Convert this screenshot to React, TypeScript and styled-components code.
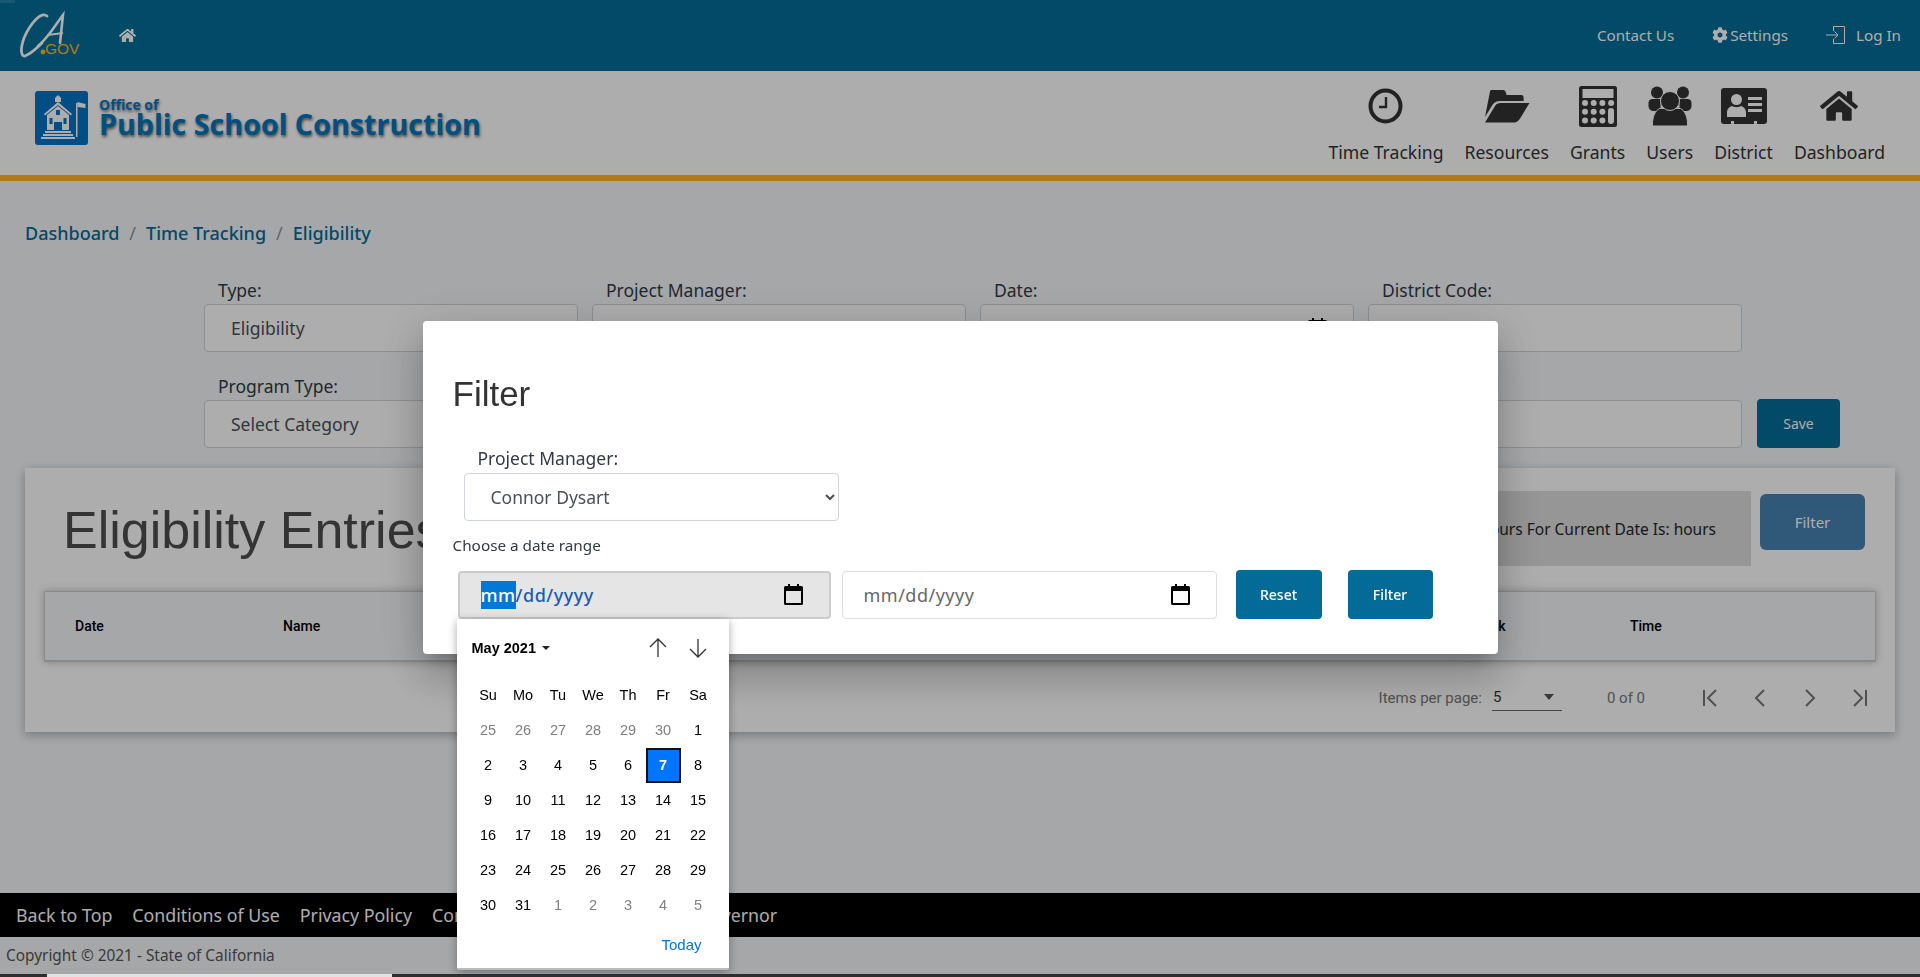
import styled, { createGlobalStyle } from "styled-components";
import { FaCog, FaHome } from "react-icons/fa";

const sans = `"Noto Sans", "Lato", sans-serif`;
const arial = `"Liberation Sans", Arial, sans-serif`;

const GlobalStyle = createGlobalStyle`
  html, body {
    margin: 0;
    padding: 0;
    height: 977px;
    overflow: hidden;
    background: #f5f7fa;
    font-family: ${sans};
    color: #323a45;
  }
  * { box-sizing: border-box; }
`;

const Page = styled.div`
  position: relative;
  display: flex;
  flex-direction: column;
  height: 977px;
`;

const CornerTab = styled.div`
  position: absolute;
  left: 0;
  top: 0;
  width: 15px;
  height: 3px;
  background: #1f84ad;
`;

const TopBar = styled.div`
  height: 71px;
  background: #036d99;
  display: flex;
  align-items: center;
  justify-content: space-between;
  padding: 0 19px 0 18px;
  color: #fff;
`;

const TopLeft = styled.div`
  display: flex;
  align-items: center;
  gap: 35px;
`;

const TopLinks = styled.div`
  display: flex;
  align-items: center;
  gap: 38px;
  font-size: 15.2px;
  padding-bottom: 1px;
`;

const TopLink = styled.span`
  display: inline-flex;
  align-items: center;
  gap: ${({ $gap }: { $gap?: number }) => $gap ?? 2}px;
`;

const Header = styled.div`
  height: 110px;
  background: #fff;
  border-bottom: 6px solid #fdb81e;
  display: flex;
  justify-content: space-between;
  padding: 20px 35px 0 35px;
`;

const Brand = styled.div`
  display: flex;
  gap: 11px;
`;

const BrandText = styled.div`
  display: flex;
  flex-direction: column;
  color: #0075bf;
  font-family: "Open Sans", sans-serif;
  font-weight: 700;
  text-shadow: 1px 2px 3px rgba(0, 0, 0, 0.55);
`;

const BrandSmall = styled.span`
  font-size: 14px;
  line-height: 14px;
  margin-top: 7px;
`;

const BrandLarge = styled.span`
  font-size: 28.7px;
  line-height: 27px;
  margin-top: -2px;
  white-space: nowrap;
`;

const Nav = styled.div`
  display: flex;
  gap: 21px;
`;

const NavItem = styled.div`
  display: flex;
  flex-direction: column;
  align-items: center;
  color: #333;
  font-size: 17.6px;
`;

const NavIcon = styled.div`
  height: 54px;
  display: flex;
  align-items: center;
  justify-content: center;
  margin-top: -12px;
  color: #333;
`;

const NavLabel = styled.span`
  margin-top: 7px;
  line-height: 24px;
  white-space: nowrap;
`;

const Content = styled.div`
  flex: 1;
  display: flex;
  flex-direction: column;
`;

const Crumbs = styled.div`
  display: flex;
  align-items: center;
  gap: 10px;
  padding: 6px 25px 0;
  height: 97px;
  font-size: 18px;
  color: #046b99;
  font-weight: 500;
`;

const CrumbSep = styled.span`
  color: #8c939a;
  font-weight: 400;
`;

const FieldGrid = styled.div`
  display: grid;
  grid-template-columns: repeat(4, 374px) 83px;
  column-gap: 14px;
  padding-left: 204px;
  align-items: end;
`;

const Field = styled.div`
  display: flex;
  flex-direction: column;
`;

const FieldLabel = styled.label`
  height: 26px;
  line-height: 24px;
  padding-left: 14px;
  font-size: 17.500px;
  color: #323a45;
`;

const FieldBox = styled.div`
  height: 48px;
  border: 1px solid #ced4da;
  border-radius: 4px;
  background: #fff;
  padding: 0 26px;
  display: flex;
  align-items: center;
  justify-content: space-between;
  font-size: 17.500px;
  color: #495057;
  margin-bottom: 22px;
`;

const SaveButton = styled.button`
  height: 49px;
  width: 83px;
  border: 0;
  border-radius: 4px;
  background: #036d99;
  color: #fff;
  font-family: ${sans};
  font-size: 14px;
  margin-bottom: 22px;
  margin-left: 1px;
`;

const Card = styled.div`
  margin: -2px 25px 0;
  height: 264px;
  background: #fff;
  box-shadow: 0 3px 10px rgba(0, 0, 0, 0.3);
  display: flex;
  flex-direction: column;
`;

const CardTop = styled.div`
  height: 123px;
  display: flex;
  padding: 23px 30px 0 38px;
  justify-content: space-between;
  align-items: flex-start;
`;

const CardTitle = styled.h1`
  margin: 10px 0 0;
  font-family: ${arial};
  font-weight: 400;
  font-size: 52px;
  line-height: 58px;
  color: #4d4d4d;
`;

const CardActions = styled.div`
  display: flex;
  gap: 9px;
`;

const HoursBox = styled.div`
  width: 420px;
  height: 75px;
  background: #ddd;
  display: flex;
  align-items: center;
  justify-content: flex-end;
  padding: 0 35px 0 0;
  font-size: 15.500px;
  color: #212529;
`;

const LightButton = styled.button`
  width: 105px;
  height: 56px;
  margin-top: 3px;
  border: 0;
  border-radius: 6px;
  background: #4882b3;
  color: #fff;
  font-family: ${sans};
  font-size: 15px;
`;

const TableHead = styled.div`
  height: 71px;
  margin: 0 19px;
  background: #f5f7fa;
  border: 1px solid #ccc;
  border-bottom-width: 2px;
  box-shadow: 0 0 8px rgba(0, 0, 0, 0.25);
  display: grid;
  grid-template-columns: 208px 1193px 154px auto;
  align-items: center;
  padding-left: 30px;
  font-family: Roboto, sans-serif;
  font-weight: 500;
  font-size: 14px;
  color: #000;
`;

const Paginator = styled.div`
  flex: 1;
  display: flex;
  align-items: center;
  justify-content: flex-end;
  padding: 1px 23px 0 0;
  color: #777;
  font-family: Roboto, sans-serif;
  font-size: 15px;
`;

const PageSize = styled.div`
  width: 70px;
  height: 27px;
  margin: 0 45px 0 10px;
  border-bottom: 1px solid #666;
  display: flex;
  justify-content: space-between;
  align-items: center;
  color: #333;
  padding: 0 8px 0 1px;
`;

const Caret = styled.span`
  width: 0;
  height: 0;
  border-left: 5px solid transparent;
  border-right: 5px solid transparent;
  border-top: 6px solid #555;
`;

const PageArrows = styled.div`
  display: flex;
  gap: 26px;
  margin-left: 53px;
  color: #777;
`;

const Footer = styled.div`
  height: 44px;
  background: #000;
  color: #fff;
  display: flex;
  align-items: center;
  gap: 20px;
  padding-left: 16px;
  font-size: 17.800px;
`;

const Copyright = styled.div`
  height: 37px;
  display: flex;
  align-items: center;
  padding-left: 6px;
  font-size: 15.400px;
  color: #555;
`;

const EdgeStrip = styled.div`
  position: relative;
  z-index: 20;
  height: 3px;
  background: #2e2e2e;
  padding-left: 47px;
`;

const EdgeTab = styled.div`
  width: 345px;
  height: 3px;
  background: #e2e2e2;
`;

const Backdrop = styled.div`
  position: fixed;
  inset: 0;
  z-index: 10;
  background: rgba(0, 0, 0, 0.32);
  display: flex;
  justify-content: center;
  padding-top: 321px;
`;

const Modal = styled.div`
  width: 1075px;
  height: 333px;
  background: #fff;
  border-radius: 4px;
  box-shadow: 0 11px 15px -7px rgba(0, 0, 0, 0.2), 0 24px 38px 3px rgba(0, 0, 0, 0.14), 0 9px 46px 8px rgba(0, 0, 0, 0.12);
  padding: 50px 30px 0;
`;

const ModalTitle = styled.h2`
  margin: 0;
  font-family: ${arial};
  font-weight: 400;
  font-size: 35px;
  line-height: 46px;
  color: #333;
`;

const ModalField = styled.div`
  margin: 29px 0 0 11px;
  width: 375px;
  display: flex;
  flex-direction: column;
`;

const ModalLabel = styled.label`
  padding-left: 14px;
  font-size: 17.500px;
  line-height: 24px;
  height: 27px;
  color: #323a45;
`;

const ManagerSelect = styled.select`
  height: 48px;
  width: 375px;
  border: 1px solid #ced4da;
  border-radius: 4px;
  background: #fff;
  padding: 0 22px;
  font-family: ${sans};
  font-size: 17.500px;
  color: #495057;
`;

const RangeLabel = styled.div`
  margin-top: 13px;
  height: 23px;
  line-height: 22px;
  font-size: 15.300px;
  color: #323a45;
`;

const RangeRow = styled.div`
  display: flex;
  align-items: center;
  gap: 11px;
  margin: 13px 0 0 5px;
`;

const DateField = styled.div<{ $active?: boolean }>`
  position: relative;
  width: ${({ $active }) => ($active ? 373 : 375)}px;
  height: 48px;
  border-radius: 4px;
  border: ${({ $active }) => ($active ? "2px solid #ccc" : "1px solid #ddd")};
  background: ${({ $active }) => ($active ? "#e5e5e5" : "#fff")};
  color: ${({ $active }) => ($active ? "#1a5cb0" : "#666")};
  font-weight: ${({ $active }) => ($active ? 500 : 400)};
  font-size: 18px;
  letter-spacing: 0.5px;
  display: flex;
  align-items: center;
  justify-content: space-between;
  padding: 0 26px 0 21px;
`;

const Highlight = styled.span`
  background: #0078d7;
  color: #fff;
  padding: 2px 0;
`;

const ModalButton = styled.button<{ $w: number; $ml: number }>`
  height: 49px;
  width: ${({ $w }) => $w}px;
  margin-left: ${({ $ml }) => $ml}px;
  border: 0;
  border-radius: 4px;
  background: #046b99;
  color: #fff;
  font-family: ${sans};
  font-size: 14px;
  font-weight: 500;
`;

const Picker = styled.div`
  position: absolute;
  left: -3px;
  top: 46px;
  width: 272px;
  height: 351px;
  background: #fff;
  border-bottom: 2px solid #bbb;
  border-radius: 2px;
  box-shadow: 0 2px 10px rgba(0, 0, 0, 0.35);
  font-family: ${arial};
  font-size: 14.500px;
  letter-spacing: 0;
  color: #000;
  font-weight: 400;
  z-index: 5;
`;

const PickerHead = styled.div`
  height: 59px;
  display: flex;
  align-items: center;
  justify-content: space-between;
  padding: 0 21px 0 15px;
`;

const PickerMonth = styled.div`
  display: flex;
  align-items: center;
  gap: 6px;
  font-weight: 700;
`;

const PickerCaret = styled.span`
  width: 0;
  height: 0;
  border-left: 4.500px solid transparent;
  border-right: 4.500px solid transparent;
  border-top: 4.500px solid #222;
`;

const PickerArrows = styled.div`
  display: flex;
  gap: 20px;
  color: #333;
`;

const DayGrid = styled.div`
  display: grid;
  grid-template-columns: repeat(7, 35px);
  grid-auto-rows: 35px;
  padding-left: 14px;
`;

const DayCell = styled.div<{ $muted?: boolean; $selected?: boolean }>`
  display: flex;
  align-items: center;
  justify-content: center;
  color: ${({ $muted, $selected }) => ($selected ? "#fff" : $muted ? "#808080" : "#000")};
  background: ${({ $selected }) => ($selected ? "#0075ff" : "transparent")};
  border: ${({ $selected }) => ($selected ? "2px solid #111" : "0")};
  font-weight: ${({ $selected }) => ($selected ? 700 : 400)};
`;

const PickerFoot = styled.div`
  display: flex;
  justify-content: flex-end;
  padding: 13px 27px 0 0;
  color: #0075e0;
  font-size: 15px;
`;

const WEEKDAYS = ["Su", "Mo", "Tu", "We", "Th", "Fr", "Sa"];
const DAYS: { d: number; muted?: boolean }[] = [
  ...[25, 26, 27, 28, 29, 30].map((d) => ({ d, muted: true })),
  ...Array.from({ length: 31 }, (_, i) => ({ d: i + 1 })),
  ...[1, 2, 3, 4, 5].map((d) => ({ d, muted: true })),
];

const CaLogo = () => (
  <svg width="66" height="52" viewBox="0 0 66 52" fill="none">
    <path d="M29 6C23 1 12 14 6 28C2 39 3 47 7 46C12 44 19 38 24 33" stroke="#fff" strokeWidth="2.800" strokeLinecap="round" />
    <path d="M20 36C30 28 38 14 45 5C44 14 43 24 42 33" stroke="#fff" strokeWidth="2.600" strokeLinecap="round" />
    <path d="M30 25L45 23" stroke="#fff" strokeWidth="2" />
    <circle cx="25" cy="42" r="2.400" fill="#fdb81e" />
    <text x="27" y="43.500" fontFamily="Liberation Sans" fontSize="15.500" fill="#fdb81e">GOV</text>
  </svg>
);

const SchoolLogo = () => (
  <svg width="53" height="54" viewBox="0 0 53 54">
    <rect width="53" height="54" rx="3" fill="#0073c4" />
    <g fill="#fff">
      <path d="M23 4l3 3v4h-6V7z" />
      <path d="M23 11L37 23l-1 1.500L23 14 10 24.500 9 23z" />
      <path d="M12 24l11-9 11 9v15H27v-8h-8v8h-7z" />
      <rect x="10" y="40" width="26" height="2" />
      <rect x="8" y="43" width="30" height="2" />
      <rect x="6" y="46" width="34" height="2" />
      <rect x="41" y="12" width="1.500" height="34" />
      <path d="M42.500 11l8 2v4l-8-1z" />
    </g>
    <g fill="#0073c4">
      <rect x="21" y="19" width="4" height="5" />
      <rect x="14.500" y="27" width="3" height="6" />
      <rect x="28.500" y="27" width="3" height="6" />
    </g>
  </svg>
);

const ClockIcon = () => (
  <svg width="35" height="36" viewBox="0 0 35 36" fill="none" stroke="#333">
    <ellipse cx="17.500" cy="18" rx="15" ry="15.500" strokeWidth="4" />
    <path d="M18 9v10h-7" strokeWidth="2.400" />
  </svg>
);

const FolderIcon = () => (
  <svg width="46" height="34" viewBox="0 0 46 34" fill="#333">
    <path d="M1 28L6 2.500C6.300 1.300 7 1 8 1h11c1.500 0 2.500 1 3 3l.5 2H37c2 0 2.600 1 2.600 3v3H16c-3 0-5 1-7 3z" />
    <path d="M1 33.500L11 17c1.500-2.300 3-3 5.500-3H45.500L37 28c-2 3.500-4 5.500-7 5.500z" />
  </svg>
);

const CalculatorIcon = () => (
  <svg width="38" height="41" viewBox="0 0 38 41">
    <rect width="38" height="41" rx="2.500" fill="#333" />
    <rect x="3.500" y="3" width="31" height="9" fill="#fff" />
    {[0, 1, 2, 3].map((c) =>
      [0, 1, 2].map((r) =>
        c === 3 && r > 0 ? null : (
          <circle key={`${c}-${r}`} cx={6 + c * 8.7} cy={17 + r * 8.8} r="3" fill="#fff" />
        )
      )
    )}
    <rect x="29" y="22" width="6" height="16" rx="3" fill="#fff" />
  </svg>
);

const UsersIcon = () => (
  <svg width="44" height="41" viewBox="0 0 44 41" fill="#333" stroke="#fff" strokeWidth="1">
    <circle cx="9" cy="6.500" r="6" stroke="none" />
    <circle cx="35" cy="6.500" r="6" stroke="none" />
    <path d="M0.500 17c0-3 2-4 4-4h8v12H6c-3 0-5.500-2-5.500-5zM43.500 17c0-3-2-4-4-4h-8v12h6.500c3 0 5.500-2 5.500-5z" stroke="none" />
    <path d="M6 40c-1 0-1.500-1-1.500-2 0-8 3-13.500 7-15.500h21c4 2 7 7.500 7 15.500 0 1-.5 2-1.500 2z" />
    <circle cx="22" cy="15" r="9.500" />
  </svg>
);

const CardIcon = () => (
  <svg width="46" height="36" viewBox="0 0 46 36">
    <path d="M3 0h40a3 3 0 0 1 3 3v30a3 3 0 0 1-3 3H36v-3h-3v3H13v-3h-3v3H3a3 3 0 0 1-3-3V3a3 3 0 0 1 3-3z" fill="#333" />
    <g fill="#fff">
      <circle cx="15.500" cy="11.500" r="5.500" />
      <path d="M6 29v-4c0-4 2-6 5-7 2 1.500 7 1.500 9 0 3 1 5 3 5 7v4z" />
      <rect x="27" y="9" width="14" height="3" />
      <rect x="27" y="15" width="14" height="3" />
      <rect x="27" y="21" width="14" height="3" />
    </g>
  </svg>
);

const DateIcon = () => (
  <svg width="19" height="21" viewBox="0 0 19 21">
    <path d="M4 0h2v2h7V0h2v2h2.500A1.500 1.500 0 0 1 19 3.500v16a1.500 1.500 0 0 1-1.500 1.500h-16A1.500 1.500 0 0 1 0 19.500v-16A1.500 1.500 0 0 1 1.500 2H4zM2 7v12h15V7z" fill="#000" />
  </svg>
);

const LoginIcon = () => (
  <svg width="19" height="18" viewBox="0 0 19 18" fill="none" stroke="#fff" strokeWidth="1">
    <path d="M7.500 5V.5h11v17h-11V13" />
    <path d="M0 9h12M8.500 5.500L12 9l-3.500 3.500" />
  </svg>
);

const ArrowV = ({ up }: { up?: boolean }) => (
  <svg width="20" height="20" viewBox="0 0 20 20" fill="none" stroke="currentColor" strokeWidth="1.300">
    {up ? <path d="M10 19V1M2 9l8-8 8 8" /> : <path d="M10 1v18M2 11l8 8 8-8" />}
  </svg>
);

const PageIcon = ({ d }: { d: string }) => (
  <svg width="24" height="24" viewBox="0 0 24 24" fill="none" stroke="currentColor" strokeWidth="2">
    <path d={d} />
  </svg>
);

const NAV = [
  { label: "Time Tracking", icon: <ClockIcon /> },
  { label: "Resources", icon: <FolderIcon /> },
  { label: "Grants", icon: <CalculatorIcon /> },
  { label: "Users", icon: <UsersIcon /> },
  { label: "District", icon: <CardIcon /> },
  { label: "Dashboard", icon: <FaHome size={38} /> },
];

const App = () => (
  <>
    <GlobalStyle />
    <Page>
      <CornerTab />
      <TopBar>
        <TopLeft>
          <CaLogo />
          <FaHome size={17} color="#fff" />
        </TopLeft>
        <TopLinks>
          <TopLink>Contact Us</TopLink>
          <TopLink>
            <FaCog size={16} />
            Settings
          </TopLink>
          <TopLink $gap={11}>
            <LoginIcon />
            Log In
          </TopLink>
        </TopLinks>
      </TopBar>
      <Header>
        <Brand>
          <SchoolLogo />
          <BrandText>
            <BrandSmall>Office of</BrandSmall>
            <BrandLarge>Public School Construction</BrandLarge>
          </BrandText>
        </Brand>
        <Nav>
          {NAV.map((n) => (
            <NavItem key={n.label}>
              <NavIcon>{n.icon}</NavIcon>
              <NavLabel>{n.label}</NavLabel>
            </NavItem>
          ))}
        </Nav>
      </Header>
      <Content>
        <Crumbs>
          <span>Dashboard</span>
          <CrumbSep>/</CrumbSep>
          <span>Time Tracking</span>
          <CrumbSep>/</CrumbSep>
          <span>Eligibility</span>
        </Crumbs>
        <FieldGrid>
          <Field>
            <FieldLabel>Type:</FieldLabel>
            <FieldBox>Eligibility</FieldBox>
          </Field>
          <Field>
            <FieldLabel>Project Manager:</FieldLabel>
            <FieldBox />
          </Field>
          <Field>
            <FieldLabel>Date:</FieldLabel>
            <FieldBox>
              <span />
              <DateIcon />
            </FieldBox>
          </Field>
          <Field>
            <FieldLabel>District Code:</FieldLabel>
            <FieldBox />
          </Field>
          <span />
          <Field>
            <FieldLabel>Program Type:</FieldLabel>
            <FieldBox>Select Category</FieldBox>
          </Field>
          <Field>
            <FieldBox />
          </Field>
          <Field>
            <FieldBox />
          </Field>
          <Field>
            <FieldBox />
          </Field>
          <SaveButton>Save</SaveButton>
        </FieldGrid>
        <Card>
          <CardTop>
            <CardTitle>Eligibility Entries</CardTitle>
            <CardActions>
              <HoursBox>Total Hours For Current Date Is: hours</HoursBox>
              <LightButton>Filter</LightButton>
            </CardActions>
          </CardTop>
          <TableHead>
            <span>Date</span>
            <span>Name</span>
            <span>Task</span>
            <span>Time</span>
          </TableHead>
          <Paginator>
            <span>Items per page:</span>
            <PageSize>
              5<Caret />
            </PageSize>
            <span>0 of 0</span>
            <PageArrows>
              <PageIcon d="M6 4v16M18 4l-8 8 8 8" />
              <PageIcon d="M16 4l-8 8 8 8" />
              <PageIcon d="M8 4l8 8-8 8" />
              <PageIcon d="M18 4v16M6 4l8 8-8 8" />
            </PageArrows>
          </Paginator>
        </Card>
      </Content>
      <Footer>
        <span>Back to Top</span>
        <span>Conditions of Use</span>
        <span>Privacy Policy</span>
        <span>Contact Us</span>
        <span>Accessibility</span>
        <span>The Governor</span>
      </Footer>
      <Copyright>Copyright © 2021 - State of California</Copyright>
      <EdgeStrip>
        <EdgeTab />
      </EdgeStrip>
    </Page>
    <Backdrop>
      <Modal>
        <ModalTitle>Filter</ModalTitle>
        <ModalField>
          <ModalLabel>Project Manager:</ModalLabel>
          <ManagerSelect defaultValue="Connor Dysart">
            <option>Connor Dysart</option>
          </ManagerSelect>
        </ModalField>
        <RangeLabel>Choose a date range</RangeLabel>
        <RangeRow>
          <DateField $active>
            <span>
              <Highlight>mm</Highlight>/dd/yyyy
            </span>
            <DateIcon />
            <Picker>
              <PickerHead>
                <PickerMonth>
                  May 2021
                  <PickerCaret />
                </PickerMonth>
                <PickerArrows>
                  <ArrowV up />
                  <ArrowV />
                </PickerArrows>
              </PickerHead>
              <DayGrid>
                {WEEKDAYS.map((w) => (
                  <DayCell key={w}>{w}</DayCell>
                ))}
                {DAYS.map((c, i) => (
                  <DayCell key={i} $muted={c.muted} $selected={!c.muted && c.d === 7}>
                    {c.d}
                  </DayCell>
                ))}
              </DayGrid>
              <PickerFoot>Today</PickerFoot>
            </Picker>
          </DateField>
          <DateField>
            <span>mm/dd/yyyy</span>
            <DateIcon />
          </DateField>
          <ModalButton $w={86} $ml={8}>Reset</ModalButton>
          <ModalButton $w={85} $ml={15}>Filter</ModalButton>
        </RangeRow>
      </Modal>
    </Backdrop>
  </>
);

export default App;
